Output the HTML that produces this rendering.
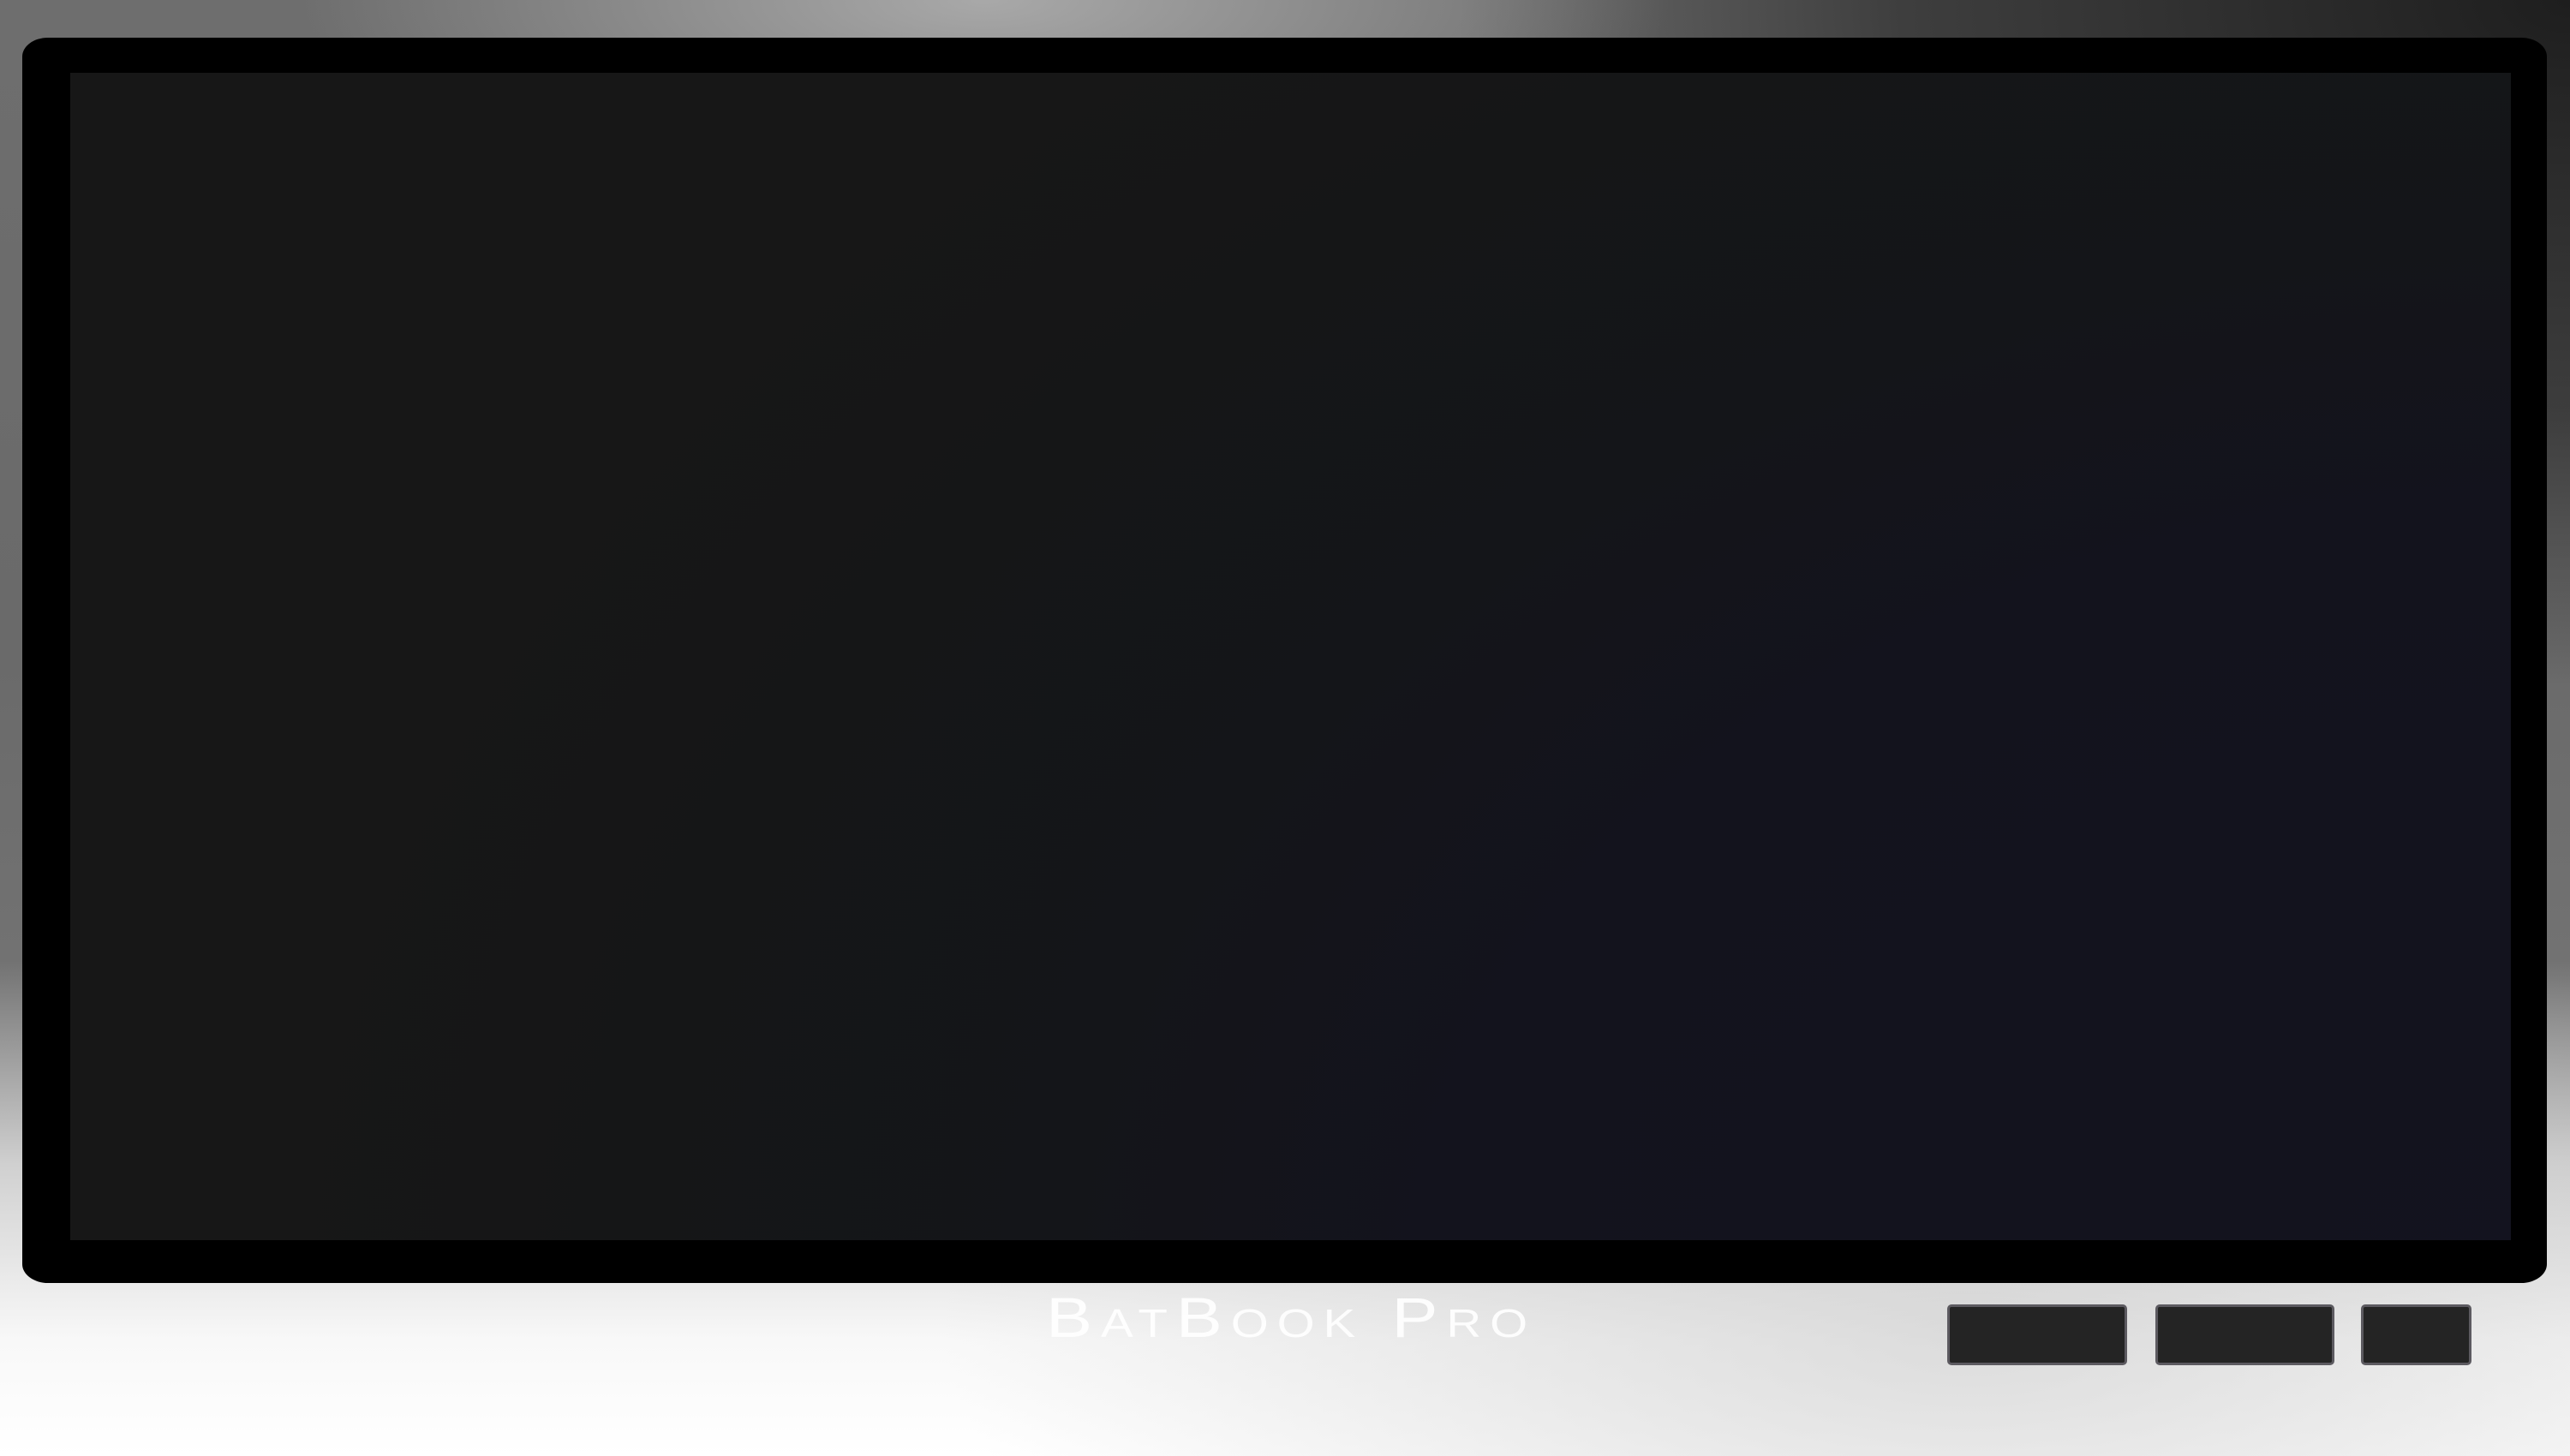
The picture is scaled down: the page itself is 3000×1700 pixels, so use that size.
<!DOCTYPE html>
<html><head><style>
html,body{margin:0;padding:0}
body{width:3000px;height:1700px;position:relative;overflow:hidden;
background:
radial-gradient(ellipse 800px 250px at 1150px 0px,rgba(175,175,175,0.9),rgba(175,175,175,0) 100%),
radial-gradient(ellipse 1300px 800px at 3000px 0px,rgba(30,30,30,1),rgba(30,30,30,0.6) 60%,rgba(30,30,30,0) 100%),
radial-gradient(ellipse 1200px 500px at 2300px 1550px,rgba(200,200,200,0.6),rgba(200,200,200,0) 100%),
linear-gradient(180deg,#6e6e6e 0%,#6a6a6a 45%,#727272 66%,#d0d0d0 80%,#f8f8f8 92%,#ffffff 100%);}
.bezel{position:absolute;left:26px;top:44px;width:2947px;height:1454px;background:#000;border-radius:30px/22px}
.screen{position:absolute;left:82px;top:85px;width:2849px;height:1363px;
background:radial-gradient(ellipse 2700px 1900px at 2931px 1448px,#13131f 0%,#13131d 50%,#141519 66%,#151617 85%,#171717 100%)}
.logo{position:absolute;left:1221px;top:1500px;font-family:"Liberation Sans",sans-serif;font-variant:small-caps;font-size:66px;letter-spacing:8px;color:rgba(255,255,255,0.9);white-space:nowrap;transform:scaleX(1.23);transform-origin:left}
.key{position:absolute;top:1523px;height:71px;background:#242424;border:3px solid #5c5a60;border-radius:5px;box-sizing:border-box}
</style></head><body>
<div class="bezel"></div>
<div class="screen"></div>
<div class="logo">BatBook Pro</div>
<div class="key" style="left:2273px;width:210px"></div>
<div class="key" style="left:2516px;width:209px"></div>
<div class="key" style="left:2756px;width:129px"></div>
</body></html>
